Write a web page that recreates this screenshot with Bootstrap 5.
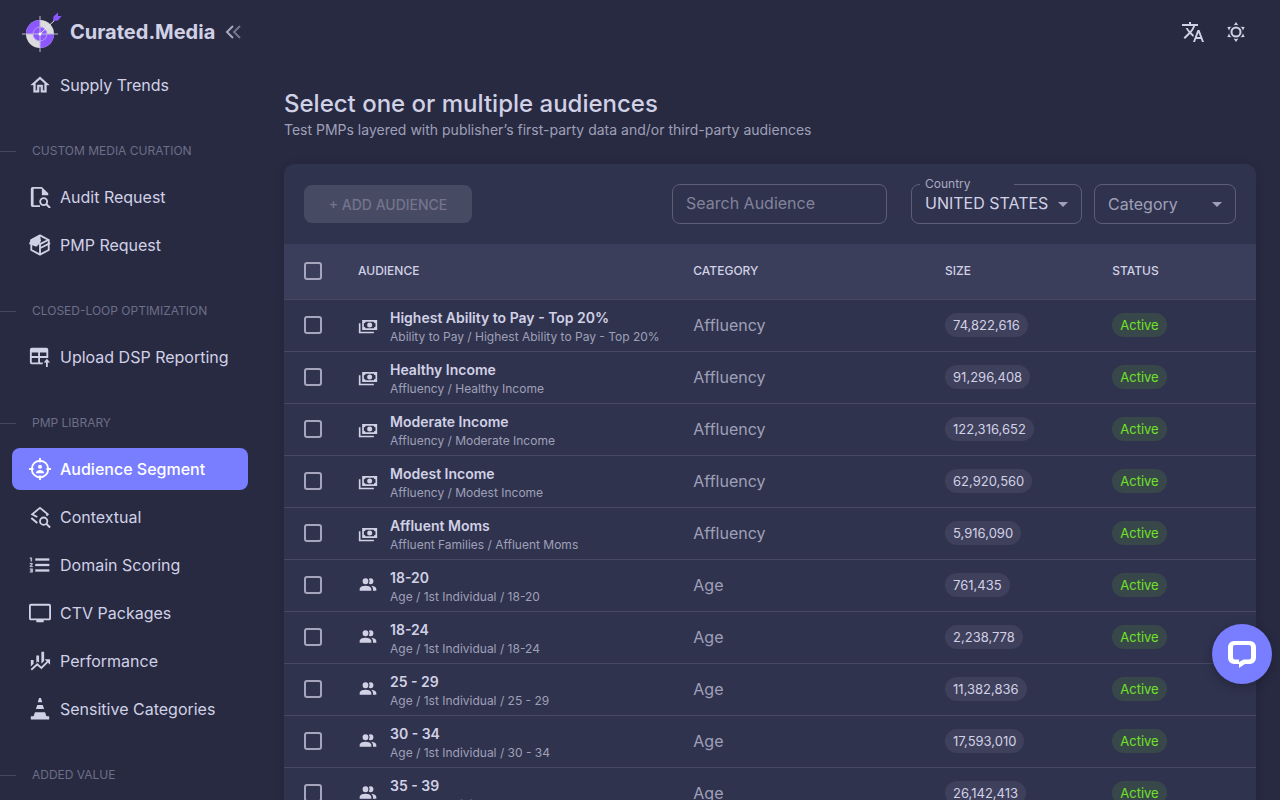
<!DOCTYPE html>
<html lang="en">
<head>
<meta charset="utf-8">
<meta name="viewport" content="width=device-width, initial-scale=1">
<title>Curated.Media – Audience Segment</title>
<link href="https://cdn.jsdelivr.net/npm/bootstrap@5.3.0/dist/css/bootstrap.min.css" rel="stylesheet">
<style>
:root { --ink: #d1d1e6; --ink-soft: #9fa0b8; --ink-dim: #727390; --paper: #30334e; --primary: #787eff; }
body { background: #282a42; color: var(--ink); font-family: Inter, "Liberation Sans", sans-serif; font-size: 16px; line-height: 24px; }
svg { flex: none; fill: currentColor; }
.side { width: 260px; }
.side-head { height: 64px; padding-left: 22px; gap: 10px; }
.brand { font-size: 20px; font-weight: 700; color: var(--ink); }
.side-link { height: 42px; margin: 0 12px 6px; padding: 0 17px; gap: 9px; border-radius: 8px; color: var(--ink); }
.side-link.active { background: var(--primary); color: #fff; font-weight: 500; }
.side-title { margin: 35px 0 15px; gap: 16px; font-size: 12px; line-height: 20px; color: #6d6e87; }
.side-title::before { content: ""; width: 16px; border-top: 1px solid #45475f; }
.icon-btn { color: var(--ink); line-height: 0; }
.page-scroll { scrollbar-width: none; }
.page-scroll::-webkit-scrollbar { display: none; }
.topbar { height: 64px; gap: 19px; padding-right: 32px; }
.page-title { font-size: 24px; line-height: 32px; font-weight: 500; }
.page-sub { font-size: 14px; line-height: 20px; color: var(--ink-soft); }
.panel { background: var(--paper); border-radius: 10px; box-shadow: 0 2px 10px rgba(20,21,33,.2); }
.toolbar { padding: 20px; }
.gap-12 { gap: 12px; }
.btn-add, .btn-add:disabled { width: 168px; height: 38px; padding: 0; border: 0; border-radius: 8px; background: #474a63; color: #73748c; font-size: 14px; font-weight: 500; opacity: 1; }
.field { height: 40px; padding: 0 13px; border: 1px solid #5d5f78; border-radius: 8px; background: transparent; color: var(--ink); font-size: 16px; appearance: none; }
.field::placeholder { color: #82839b; opacity: 1; }
.field option { background: var(--paper); }
.w-search { width: 215px; margin-right: 12px; }
.w-search, .w-country .field { padding-bottom: 2px; }
.w-country { width: 171px; }
.w-category { width: 142px; }
.w-category .field { color: var(--ink-soft); }
.field-label { top: -8px; left: 9px; width: 94px; padding-left: 5px; background: var(--paper); color: #a9aac1; font-size: 12px; line-height: 16px; }
.caret { top: 8px; right: 7px; color: var(--ink-soft); pointer-events: none; }
.grid-table { table-layout: fixed; width: 100%; border-collapse: separate; border-spacing: 0; }
.grid-table th, .grid-table td { padding: 0 0 2px 16px; border-bottom: 1px solid #474962; vertical-align: middle; }
.grid-table th:first-child, .grid-table td:first-child { padding-left: 20px; }
.grid-table th { height: 56px; background: #3a3e5b; font-size: 12px; font-weight: 500; }
.grid-table td { height: 52px; }
.col-pick { width: 58px; } .col-aud { width: 34.5%; } .col-cat { width: 25.9%; } .col-size { width: 17.2%; }
.pick { appearance: none; display: block; width: 18px; height: 18px; margin: 0; border: 2px solid #a5a6be; border-radius: 3px; }
.pick:checked { background: var(--primary); border-color: var(--primary); }
.aud-text { padding-top: 6px; }
.aud-name { font-size: 14px; line-height: 18px; font-weight: 600; }
.aud-path { font-size: 12px; line-height: 20px; color: var(--ink-soft); }
.cat { color: var(--ink-soft); }
.chip { display: inline-block; padding: 0 8px; border-radius: 12px; background: #3f405b; font-size: 13px; line-height: 24px; vertical-align: middle; }
.chip-on { background: #38484a; color: #72e128; }
.chat { right: 8px; bottom: 116px; width: 60px; height: 60px; background: var(--primary); color: #fff; box-shadow: 0 3px 10px rgba(20,21,33,.4); }
</style>
</head>
<body>
<svg class="d-none" xmlns="http://www.w3.org/2000/svg">
  <symbol id="cash" viewBox="0 0 24 24"><path d="M5 6H23V18H5V6M14 9A3 3 0 0 1 17 12A3 3 0 0 1 14 15A3 3 0 0 1 11 12A3 3 0 0 1 14 9M9 8A2 2 0 0 1 7 10V14A2 2 0 0 1 9 16H19A2 2 0 0 1 21 14V10A2 2 0 0 1 19 8H9M1 10H3V20H19V22H1V10Z"/></symbol>
  <symbol id="people" viewBox="0 0 24 24"><path d="M16 17V19H2V17S2 13 9 13 16 17 16 17M12.5 7.5A3.5 3.5 0 1 0 9 11A3.5 3.5 0 0 0 12.5 7.5M15.94 13A5.32 5.32 0 0 1 18 17V19H22V17S22 13.37 15.94 13M15 4A3.39 3.39 0 0 0 13.07 4.59A5 5 0 0 1 13.07 10.41A3.39 3.39 0 0 0 15 11A3.5 3.5 0 0 0 15 4Z"/></symbol>
</svg>

<div class="d-flex vh-100 overflow-hidden">
  <aside class="side d-flex flex-column flex-shrink-0 overflow-hidden">
    <div class="side-head d-flex align-items-center flex-shrink-0">
      <a href="#" class="brand d-flex align-items-center text-decoration-none gap-2">
        <svg width="40" height="40" viewBox="0 0 40 40" aria-hidden="true">
          <circle cx="18" cy="22" r="14" fill="#dcdcdf"/>
          <path d="M18 22V8A14 14 0 0 0 4 22ZM18 22V36A14 14 0 0 0 32 22Z" fill="#8c57ff"/>
          <circle cx="18" cy="22" r="7" fill="#8c57ff" stroke="#b79aff"/>
          <path d="M18 4V40M0 22H36" stroke="#bdb9cf" stroke-width="1"/>
          <path d="M18 22L34 7" stroke="#e8e4ff" stroke-width="1"/>
          <circle cx="18" cy="22" r="1.5" fill="#fff"/>
          <path d="M31 9L31.500 4.500L36 0.500L36 4L39.500 4L36 8.500Z" fill="#8c57ff"/>
        </svg>
        <span>Curated.Media</span>
      </a>
      <button type="button" class="icon-btn btn p-0 border-0" aria-label="Collapse menu">
        <svg width="16" height="16" viewBox="0 0 16 16" style="fill:none" stroke="currentColor" stroke-width="2"><path d="M8 2L2 8L8 14" opacity=".75"/><path d="M15 2L9 8L15 14" opacity=".45"/></svg>
      </button>
    </div>
    <nav aria-label="Main">
      <a href="#" class="side-link d-flex align-items-center text-decoration-none"><svg width="22" height="22" viewBox="0 0 24 24"><path d="M12 5.69L17 10.19V18H15V12H9V18H7V10.19L12 5.69M12 3L2 12H5V20H11V14H13V20H19V12H22L12 3Z" stroke="currentColor" stroke-width=".5"/></svg>Supply Trends</a>

      <div class="side-title d-flex align-items-center">CUSTOM MEDIA CURATION</div>
      <a href="#" class="side-link d-flex align-items-center text-decoration-none"><svg width="22" height="22" viewBox="0 0 24 24"><path d="M4 1H14L21 8V10H14V3H5V21H12V23H4A2 2 0 0 1 2 21V3A2 2 0 0 1 4 1Z"/><circle cx="16" cy="17" r="3.8" fill="none" stroke="currentColor" stroke-width="2"/><path d="M19 20L23 24" stroke="currentColor" stroke-width="2.2"/></svg>Audit Request</a>
      <a href="#" class="side-link d-flex align-items-center text-decoration-none"><svg width="22" height="22" viewBox="0 0 24 24"><path d="M12 1.5L21.5 6.5V17.5L12 22.5L2.500 17.500V6.500Z" fill="none" stroke="currentColor" stroke-width="2" stroke-linejoin="round"/><path d="M12 1L2 6L0 11L8 14L12 10L13 7Z"/><path d="M12 10V23M12 11L22 6M13 15L23 10" fill="none" stroke="currentColor" stroke-width="2"/></svg>PMP Request</a>

      <div class="side-title d-flex align-items-center">CLOSED-LOOP OPTIMIZATION</div>
      <a href="#" class="side-link d-flex align-items-center text-decoration-none"><svg width="22" height="22" viewBox="0 0 24 24"><path fill-rule="evenodd" d="M3 2H19A2 2 0 0 1 21 4V13H12V18H15V20H3A2 2 0 0 1 1 18V4A2 2 0 0 1 3 2ZM3 7V11H10V7ZM12 7V11H19V7ZM3 13V18H10V13Z"/><path d="M19.500 14L23 18H20.500V23H18.500V18H16Z"/></svg>Upload DSP Reporting</a>

      <div class="side-title d-flex align-items-center">PMP LIBRARY</div>
      <a href="#" aria-current="page" class="side-link active d-flex align-items-center text-decoration-none"><svg width="22" height="22" viewBox="0 0 24 24"><circle cx="12" cy="12" r="9" fill="none" stroke="currentColor" stroke-width="2"/><path d="M12 0V5M12 19V24M0 12H5M19 12H24" stroke="currentColor" stroke-width="2"/><circle cx="12" cy="9.500" r="2.200"/><path d="M7.500 16.500C7.500 14 10 13 12 13S16.500 14 16.500 16.500Z"/></svg>Audience Segment</a>
      <a href="#" class="side-link d-flex align-items-center text-decoration-none"><svg width="22" height="22" viewBox="0 0 24 24"><g fill="none" stroke="currentColor" stroke-width="2"><path d="M9 12L3.500 9L12 2L20.500 9L19 10.500"/><path d="M2.500 13L9 18.500" stroke-width="2.200"/><circle cx="16" cy="16.500" r="4"/><path d="M19 19.500L23 23.500" stroke-width="2.200"/></g></svg>Contextual</a>
      <a href="#" class="side-link d-flex align-items-center text-decoration-none"><svg width="22" height="22" viewBox="0 0 24 24"><path d="M7 13V11H22V13H7M7 19V17H22V19H7M7 7V5H22V7H7M2 8V5H1V4H3V8H2M1 17V16H4V20H1V19H3V18.500H2V17.500H3V17H1M3.250 10C3.660 10 4 10.340 4 10.750C4 10.950 3.920 11.140 3.790 11.270L2.120 13H4V14H1V13.080L3 11H1V10H3.250Z" stroke="currentColor" stroke-width=".4"/></svg>Domain Scoring</a>
      <a href="#" class="side-link d-flex align-items-center text-decoration-none"><svg width="22" height="22" viewBox="0 0 24 24"><path d="M22 2H2C1 2 0 3 0 4V18C0 19 1 20 2 20H8V22H16V20H22C23 20 24 19 24 18V4C24 3 23 2 22 2ZM22 18H2V4H22Z"/></svg>CTV Packages</a>
      <a href="#" class="side-link d-flex align-items-center text-decoration-none"><svg width="22" height="22" viewBox="0 0 24 24"><path d="M2 11H5V15L2 18ZM8 6H11V14L9.500 12.500L8 14ZM13.500 2H16.500V12L13.500 15Z"/><path d="M2.500 21.500L9 15.500L13.500 19.500L21.500 11.500" fill="none" stroke="currentColor" stroke-width="2"/><path d="M17 10H23V16Z"/></svg>Performance</a>
      <a href="#" class="side-link d-flex align-items-center text-decoration-none"><svg width="22" height="22" viewBox="0 0 24 24"><path d="M11 0H13L14.500 4.500H9.500ZM9 7.500H15L16.500 12H7.500ZM6.500 15.500H17.500L19 20H22V23.500H2V20H5Z"/></svg>Sensitive Categories</a>

      <div class="side-title d-flex align-items-center">ADDED VALUE</div>
    </nav>
  </aside>

  <main class="page-scroll flex-grow-1 overflow-auto">
    <div class="topbar d-flex justify-content-end align-items-center">
      <button type="button" class="icon-btn btn p-0 border-0" aria-label="Language"><svg width="24" height="24" viewBox="0 0 24 24"><path d="M12.870 15.070L10.330 12.560L10.360 12.530C12.100 10.590 13.340 8.360 14.070 6H17V4H10V2H8V4H1V6H12.170C11.500 7.920 10.440 9.750 9 11.350C8.070 10.320 7.300 9.190 6.690 8H4.690C5.420 9.630 6.420 11.170 7.670 12.560L2.580 17.580L4 19L9 14L12.110 17.110L12.870 15.070M18.500 10H16.500L12 22H14L15.120 19H19.870L21 22H23L18.500 10M15.880 17L17.500 12.670L19.120 17H15.880Z"/></svg></button>
      <button type="button" class="icon-btn btn p-0 border-0" aria-label="Toggle theme"><svg width="24" height="24" viewBox="0 0 24 24"><circle cx="12" cy="12" r="4.500" fill="none" stroke="currentColor" stroke-width="2"/><path d="M12 2L14.390 5.420C13.650 5.150 12.840 5 12 5S10.350 5.150 9.610 5.420L12 2M3.340 7L7.500 6.650C6.900 7.160 6.360 7.780 5.940 8.500C5.500 9.240 5.250 10 5.110 10.790L3.340 7M3.360 17L5.120 13.230C5.260 14 5.530 14.780 5.950 15.500C6.370 16.240 6.910 16.860 7.500 17.370L3.360 17M20.650 7L18.880 10.790C18.740 10 18.470 9.230 18.050 8.500C17.630 7.780 17.100 7.150 16.500 6.640L20.650 7M20.640 17L16.500 17.360C17.090 16.850 17.620 16.220 18.040 15.500C18.460 14.770 18.730 14 18.870 13.210L20.640 17M12 22L9.590 18.560C10.330 18.830 11.140 19 12 19C12.820 19 13.630 18.830 14.370 18.560L12 22Z"/></svg></button>
    </div>
    <div class="p-4">
      <h1 class="page-title mb-0">Select one or multiple audiences</h1>
      <p class="page-sub mb-4">Test PMPs layered with publisher’s first-party data and/or third-party audiences</p>
      <section class="panel overflow-hidden">
        <div class="toolbar d-flex align-items-center justify-content-between">
          <button type="button" class="btn btn-add" disabled>+ ADD AUDIENCE</button>
          <div class="d-flex gap-12">
            <input type="search" class="field w-search" placeholder="Search Audience" aria-label="Search Audience">
            <div class="w-country position-relative">
              <select id="country" class="field w-100"><option>UNITED STATES</option><option>CANADA</option></select>
              <label for="country" class="field-label position-absolute">Country</label>
              <svg class="caret position-absolute" width="24" height="24" viewBox="0 0 24 24"><path d="M7 10L12 15L17 10Z"/></svg>
            </div>
            <div class="w-category position-relative">
              <select class="field w-100" aria-label="Category"><option>Category</option><option>Affluency</option><option>Age</option></select>
              <svg class="caret position-absolute" width="24" height="24" viewBox="0 0 24 24"><path d="M7 10L12 15L17 10Z"/></svg>
            </div>
          </div>
        </div>
        <table class="grid-table">
          <colgroup><col class="col-pick"><col class="col-aud"><col class="col-cat"><col class="col-size"><col></colgroup>
          <thead><tr><th><input type="checkbox" class="pick" aria-label="Select all"></th><th scope="col">AUDIENCE</th><th scope="col">CATEGORY</th><th scope="col">SIZE</th><th scope="col">STATUS</th></tr></thead>
          <tbody id="rows"></tbody>
        </table>
      </section>
    </div>
  </main>
</div>

<button type="button" class="chat btn rounded-circle border-0 p-0 position-fixed d-flex align-items-center justify-content-center" aria-label="Open chat">
  <svg width="28" height="28" viewBox="0 0 28 28"><path fill-rule="evenodd" d="M6 1H22A6 6 0 0 1 28 7V18A6 6 0 0 1 22 24H17L11 28V24H6A6 6 0 0 1 0 18V7A6 6 0 0 1 6 1ZM7 5Q5 5 5 7V17Q5 19.500 7 19.500H11V22L15.500 19.500H21Q23 19.500 23 17.500V7Q23 5 21 5Z"/></svg>
</button>

<script src="https://cdn.jsdelivr.net/npm/bootstrap@5.3.0/dist/js/bootstrap.bundle.min.js"></script>
<script>
const audiences = [
  ["Highest Ability to Pay - Top 20%", "Ability to Pay / Highest Ability to Pay - Top 20%", "Affluency", "74,822,616"],
  ["Healthy Income", "Affluency / Healthy Income", "Affluency", "91,296,408"],
  ["Moderate Income", "Affluency / Moderate Income", "Affluency", "122,316,652"],
  ["Modest Income", "Affluency / Modest Income", "Affluency", "62,920,560"],
  ["Affluent Moms", "Affluent Families / Affluent Moms", "Affluency", "5,916,090"],
  ["18-20", "Age / 1st Individual / 18-20", "Age", "761,435"],
  ["18-24", "Age / 1st Individual / 18-24", "Age", "2,238,778"],
  ["25 - 29", "Age / 1st Individual / 25 - 29", "Age", "11,382,836"],
  ["30 - 34", "Age / 1st Individual / 30 - 34", "Age", "17,593,010"],
  ["35 - 39", "Age / 1st Individual / 35 - 39", "Age", "26,142,413"]
];
document.getElementById("rows").innerHTML = audiences.map(([name, path, category, size]) => `
  <tr>
    <td><input type="checkbox" class="pick" aria-label="Select ${name}"></td>
    <td><div class="d-flex align-items-center overflow-hidden gap-12">
      <svg width="20" height="20" aria-hidden="true"><use href="#${category === "Age" ? "people" : "cash"}"/></svg>
      <div class="aud-text overflow-hidden text-nowrap"><div class="aud-name">${name}</div><div class="aud-path">${path}</div></div>
    </div></td>
    <td class="cat">${category}</td>
    <td><span class="chip">${size}</span></td>
    <td><span class="chip chip-on">Active</span></td>
  </tr>`).join("");
</script>
</body>
</html>
